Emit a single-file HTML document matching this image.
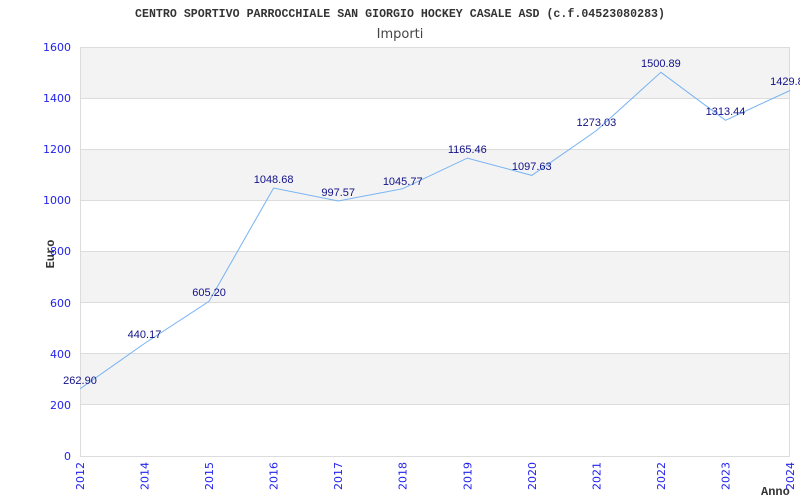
<!DOCTYPE html>
<html><head><style>body{margin:0;background:#fff}svg{display:block}</style></head><body>
<svg width="800" height="500" xmlns="http://www.w3.org/2000/svg">
<rect width="800" height="500" fill="#fff"/>
<g fill="#f3f3f3">
<rect x="80" y="47" width="710" height="51.1"/>
<rect x="80" y="149.2" width="710" height="51.1"/>
<rect x="80" y="251.5" width="710" height="51.1"/>
<rect x="80" y="353.7" width="710" height="51.1"/>
</g>
<g stroke="#dcdcdc" stroke-width="1">
<line x1="80" y1="98.5" x2="790" y2="98.5"/><line x1="80" y1="149.5" x2="790" y2="149.5"/>
<line x1="80" y1="200.5" x2="790" y2="200.5"/><line x1="80" y1="251.5" x2="790" y2="251.5"/>
<line x1="80" y1="302.5" x2="790" y2="302.5"/><line x1="80" y1="353.5" x2="790" y2="353.5"/>
<line x1="80" y1="404.5" x2="790" y2="404.5"/>
<rect x="80.5" y="47.5" width="709" height="409" fill="none"/>
</g>
<g font-family="Liberation Mono, monospace" font-weight="bold" fill="#333">
<text x="400" y="17" text-anchor="middle" font-size="11.6" textLength="530">CENTRO SPORTIVO PARROCCHIALE SAN GIORGIO HOCKEY CASALE ASD (c.f.04523080283)</text>
<text x="761" y="495" font-size="12">Anno</text>
<text x="0" y="0" font-size="12" transform="translate(54,254) rotate(-90)" text-anchor="middle">Euro</text>
</g>
<text x="400" y="38" text-anchor="middle" font-family="DejaVu Sans, sans-serif" font-size="13" fill="#444">Importi</text>
<g font-family="DejaVu Sans, sans-serif" font-size="11" fill="#2222ee" text-anchor="end">
<text x="71" y="51">1600</text><text x="71" y="102">1400</text><text x="71" y="153">1200</text>
<text x="71" y="204">1000</text><text x="71" y="255">800</text><text x="71" y="307">600</text>
<text x="71" y="358">400</text><text x="71" y="409">200</text><text x="71" y="460">0</text>
</g>
<g font-family="DejaVu Sans, sans-serif" font-size="11" fill="#2222ee" text-anchor="end">
<text transform="translate(84,462) rotate(-90)">2012</text>
<text transform="translate(148.5,462) rotate(-90)">2014</text>
<text transform="translate(213.1,462) rotate(-90)">2015</text>
<text transform="translate(277.6,462) rotate(-90)">2016</text>
<text transform="translate(342.2,462) rotate(-90)">2017</text>
<text transform="translate(406.7,462) rotate(-90)">2018</text>
<text transform="translate(471.3,462) rotate(-90)">2019</text>
<text transform="translate(535.8,462) rotate(-90)">2020</text>
<text transform="translate(600.4,462) rotate(-90)">2021</text>
<text transform="translate(664.9,462) rotate(-90)">2022</text>
<text transform="translate(729.5,462) rotate(-90)">2023</text>
<text transform="translate(794,462) rotate(-90)">2024</text>
</g>
<polyline fill="none" stroke="#77b3f3" stroke-width="1" points="80,388.8 144.5,343.5 209.1,301.3 273.6,188 338.2,201 402.7,188.7 467.3,158.1 531.8,175.4 596.4,130.6 660.9,72.3 725.5,120.3 790,90.5"/>
<g font-family="Liberation Sans, sans-serif" font-size="11" fill="#111188" text-anchor="middle">
<text x="80" y="384">262.90</text>
<text x="144.5" y="338">440.17</text>
<text x="209.1" y="296">605.20</text>
<text x="273.6" y="183">1048.68</text>
<text x="338.2" y="196">997.57</text>
<text x="402.7" y="185">1045.77</text>
<text x="467.3" y="153">1165.46</text>
<text x="531.8" y="170">1097.63</text>
<text x="596.4" y="126">1273.03</text>
<text x="660.9" y="67">1500.89</text>
<text x="725.5" y="115">1313.44</text>
<text x="790" y="85">1429.80</text>
</g>
</svg>
</body></html>
